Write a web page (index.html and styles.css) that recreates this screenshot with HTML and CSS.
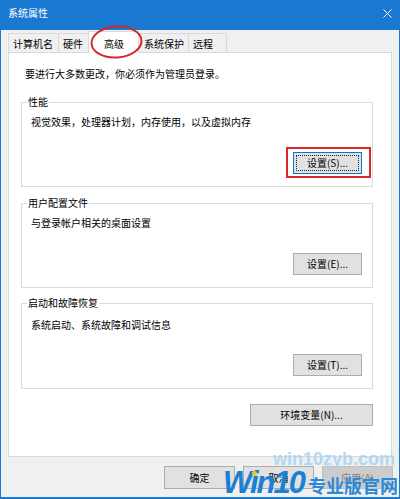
FILE: index.html
```html
<!DOCTYPE html>
<html lang="zh-CN">
<head>
<meta charset="utf-8">
<title>系统属性</title>
<link rel="stylesheet" href="styles.css">
</head>
<body>
<div class="window">
  <div class="titlebar">
    <span class="title">系统属性</span>
    <svg class="close" width="10" height="10" viewBox="0 0 10 10"><path d="M0.5 0.5L9.5 9.5M9.5 0.5L0.5 9.5" stroke="#fff" stroke-width="1.1" fill="none"/></svg>
  </div>
  <div class="tabs">
    <div class="tab t1">计算机名</div>
    <div class="tab t2">硬件</div>
    <div class="tab t3 active">高级</div>
    <div class="tab t4">系统保护</div>
    <div class="tab t5">远程</div>
  </div>
  <div class="panel">
    <p class="note">要进行大多数更改，你必须作为管理员登录。</p>
    <fieldset class="group g1">
      <legend>性能</legend>
      <p class="desc">视觉效果，处理器计划，内存使用，以及虚拟内存</p>
      <div class="row"><button class="btn set focus">设置(S)...</button></div>
    </fieldset>
    <fieldset class="group g2">
      <legend>用户配置文件</legend>
      <p class="desc">与登录帐户相关的桌面设置</p>
      <div class="row"><button class="btn set">设置(E)...</button></div>
    </fieldset>
    <fieldset class="group g3">
      <legend>启动和故障恢复</legend>
      <p class="desc">系统启动、系统故障和调试信息</p>
      <div class="row"><button class="btn set">设置(T)...</button></div>
    </fieldset>
    <div class="row env-row"><button class="btn env">环境变量(N)...</button></div>
  </div>
  <div class="footer">
    <button class="btn dlg">确定</button>
    <button class="btn dlg">取消</button>
    <button class="btn dlg disabled">应用(A)</button>
  </div>

  <svg class="mark-ellipse" width="56" height="38" viewBox="0 0 56 38"><ellipse cx="27.5" cy="18" rx="25" ry="15.5" transform="rotate(-4 27.5 18)" fill="none" stroke="#d8262b" stroke-width="2"/></svg>
  <div class="mark-rect"></div>

  <div class="wm-site">win10zyb.com</div>
  <div class="wm-logo"><span class="wm-win">Win10</span><span class="wm-cn">专业版官网</span></div>
  <div class="wm-dot"></div>
</div>
</body>
</html>
```
FILE: styles.css
```css
* { box-sizing: border-box; }
html, body { margin: 0; padding: 0; }
body {
  width: 400px;
  height: 499px;
  overflow: hidden;
  font-family: "Noto Sans CJK SC", "Liberation Sans", sans-serif;
  font-size: 10px;
  color: #000;
}
.window {
  position: relative;
  width: 400px;
  height: 499px;
  background: #f0f0f0;
  border: 1px solid #1979d0;
  border-top: 0;
  border-bottom: 2px solid #1979d0;
  display: flex;
  flex-direction: column;
  overflow: hidden;
}
.titlebar {
  height: 30px;
  flex: none;
  background: #1979d0;
  display: flex;
  align-items: flex-start;
  padding: 6px 7px 0 7px;
}
.title {
  color: #fff;
  line-height: 14px;
}
.close {
  margin-left: auto;
  margin-top: 3px;
  width: 9px;
  height: 9px;
}
.tabs {
  flex: none;
  display: flex;
  align-items: flex-end;
  height: 19px;
  margin-top: 3px;
  padding-left: 7px;
}
.tab {
  height: 19px;
  border: 1px solid #d9d9d9;
  border-bottom: 0;
  border-right: 0;
  padding: 3px 0 1px 4px;
  line-height: 14px;
  white-space: nowrap;
  background: #f0f0f0;
}
.t1 { width: 50px; }
.t2 { width: 30px; }
.t3 { width: 51px; padding-left: 15px; }
.t4 { width: 49px; padding-left: 5px; border-left: 0; }
.t5 { width: 39px; border-right: 1px solid #d9d9d9; }
.tab.active {
  position: relative;
  z-index: 1;
  height: 22px;
  margin-bottom: -1px;
  padding-top: 5px;
  padding-bottom: 2px;
  background: #fff;
  border-right: 1px solid #d9d9d9;
}
.panel {
  flex: none;
  margin: 0 7px;
  background: #fff;
  border: 1px solid #d9d9d9;
  padding: 0 0 30px 0;
}
.note {
  margin: 14px 0 0 16px;
  line-height: 14px;
}
.group {
  margin: 14px 18px 0 12px;
  padding: 0 10px 12px 0;
  border: 1px solid #dcdcdc;
  min-width: 0;
}
.g2 { margin-top: 9px; }
.g3 { margin-top: 8px; }
.group legend {
  margin-left: 5px;
  padding: 0 1px;
  line-height: 14px;
  font-size: 10px;
}
.desc {
  margin: 6px 0 0 9px;
  line-height: 14px;
}
.g3 .desc { margin-top: 8px; }
.row {
  display: flex;
  justify-content: flex-end;
  margin-top: 23px;
}
.g3 .row { margin-top: 22px; }
.btn {
  font-family: "Noto Sans CJK SC", "Liberation Sans", sans-serif;
  font-size: 10px;
  line-height: 14px;
  color: #000;
  background: #e1e1e1;
  border: 1px solid #adadad;
  padding: 0;
  margin: 0;
  border-radius: 0;
}
.set { width: 69px; height: 22px; }
.btn.focus {
  border-color: #0078d7;
  outline: 1px dotted #222;
  outline-offset: -4px;
}
.env-row { margin: 15px 18px 0 0; }
.env { width: 123px; height: 22px; }
.footer {
  flex: none;
  display: flex;
  justify-content: flex-end;
  gap: 8px;
  margin-top: 9px;
  padding-right: 6px;
}
.dlg { width: 71px; height: 23px; }
.btn.disabled {
  background: #cccccc;
  border-color: #bfbfbf;
  color: #838383;
}
.mark-ellipse {
  position: absolute;
  left: 88px;
  top: 24px;
  z-index: 2;
}
.mark-rect {
  position: absolute;
  left: 285px;
  top: 147px;
  width: 85px;
  height: 31px;
  border: 2px solid #d8262b;
  z-index: 2;
}
.wm-site {
  position: absolute;
  left: 272px;
  top: 450px;
  font-family: "Liberation Sans", Arial, sans-serif;
  font-weight: bold;
  font-size: 18px;
  line-height: 18px;
  color: #a6d4f0;
  opacity: 0.85;
  z-index: 3;
  white-space: nowrap;
}
.wm-logo {
  position: absolute;
  left: 222px;
  top: 467px;
  display: flex;
  align-items: baseline;
  z-index: 3;
  white-space: nowrap;
}
.wm-win {
  font-family: "Liberation Sans", Arial, sans-serif;
  font-style: italic;
  font-weight: bold;
  font-size: 31px;
  line-height: 31px;
  letter-spacing: -2px;
  color: #1b80d4;
}
.wm-cn {
  margin-left: 4px;
  font-family: "Noto Sans CJK SC", sans-serif;
  font-weight: bold;
  font-size: 18px;
  line-height: 18px;
  color: #2a8ad8;
}
.wm-dot {
  position: absolute;
  left: 251px;
  top: 471px;
  width: 5px;
  height: 5px;
  border-radius: 50%;
  background: #f5c22a;
  z-index: 4;
}
```
